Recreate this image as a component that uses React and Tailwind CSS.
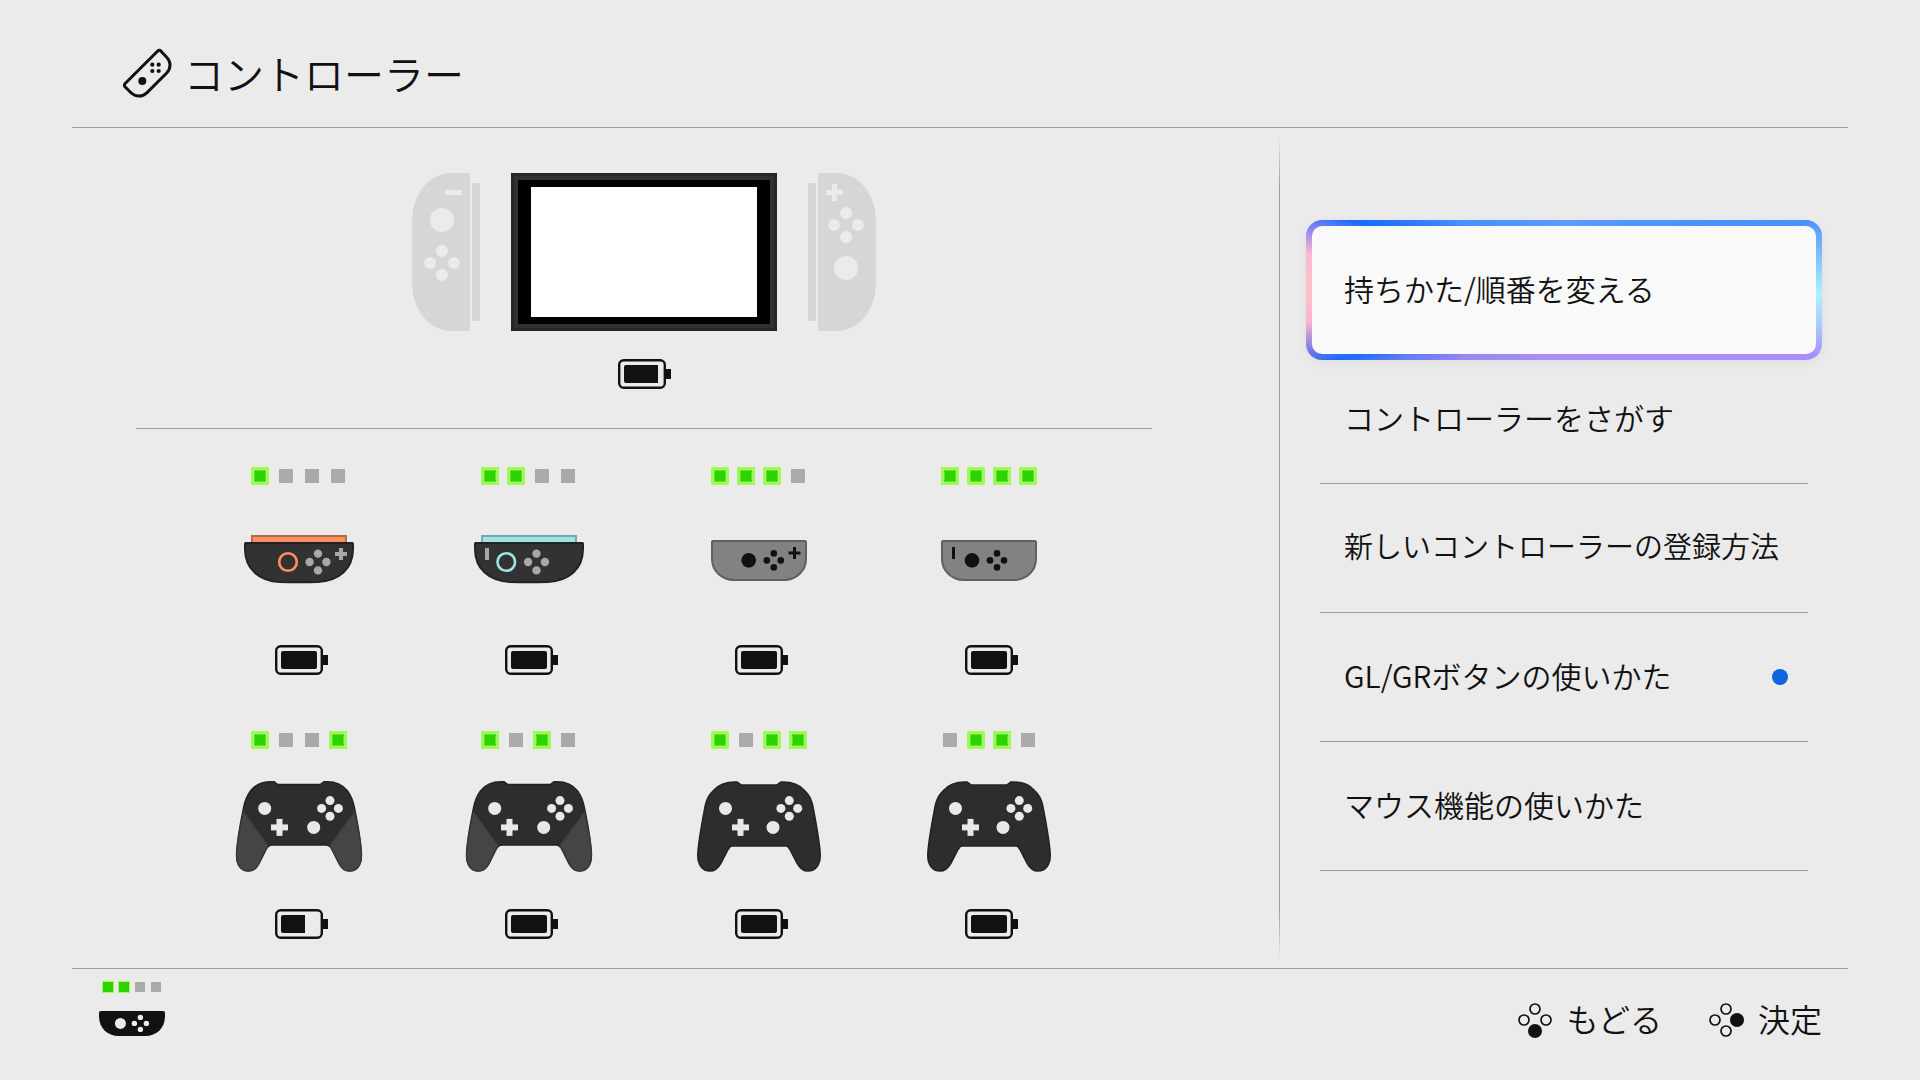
import { useState } from 'react'
import clsx from 'clsx'

const MENU = [
  { id: 'grip', label: '持ちかた/順番を変える' },
  { id: 'find', label: 'コントローラーをさがす' },
  { id: 'pair', label: '新しいコントローラーの登録方法', long: true },
  { id: 'glgr', label: 'GL/GRボタンの使いかた', unread: true },
  { id: 'mouse', label: 'マウス機能の使いかた' },
]

const CONTROLLERS = [
  { id: 1, kind: 'joycon2-right', lights: [1, 0, 0, 0], charge: 36 },
  { id: 2, kind: 'joycon2-left', lights: [1, 1, 0, 0], charge: 36 },
  { id: 3, kind: 'joycon-right', lights: [1, 1, 1, 0], charge: 36 },
  { id: 4, kind: 'joycon-left', lights: [1, 1, 1, 1], charge: 36 },
  { id: 5, kind: 'pro2', lights: [1, 0, 0, 1], charge: 24 },
  { id: 6, kind: 'pro2', lights: [1, 0, 1, 0], charge: 36 },
  { id: 7, kind: 'pro', lights: [1, 0, 1, 1], charge: 36 },
  { id: 8, kind: 'pro', lights: [0, 1, 1, 0], charge: 36 },
]

function Dots({ cx, cy, dx, dy = dx, r, fill }) {
  return (
    <g fill={fill}>
      <circle cx={cx} cy={cy - dy} r={r} />
      <circle cx={cx - dx} cy={cy} r={r} />
      <circle cx={cx + dx} cy={cy} r={r} />
      <circle cx={cx} cy={cy + dy} r={r} />
    </g>
  )
}

function Plus({ cx, cy, size, w, fill }) {
  return (
    <g fill={fill}>
      <rect x={cx - size / 2} y={cy - w / 2} width={size} height={w} />
      <rect x={cx - w / 2} y={cy - size / 2} width={w} height={size} />
    </g>
  )
}

function Battery({ charge }) {
  return (
    <svg width="54" height="30" viewBox="0 0 54 30">
      <rect x="2.2" y="1.2" width="45.6" height="27.6" rx="4.5" fill="none" stroke="#111" strokeWidth="2.4" />
      <rect x="49" y="10" width="5" height="10" fill="#111" />
      <rect x="7" y="6" width={charge} height="18" rx="2" fill="#111" />
      {charge < 36 && <rect x={charge} y="6" width="7" height="18" fill="#111" />}
    </svg>
  )
}

function Lights({ on }) {
  return (
    <div className="flex gap-2">
      {on.map((lit, i) => (
        <span key={i} className="w-[18px] h-[18px] flex items-center justify-center">
          {lit ? (
            <span className="w-[18px] h-[18px] bg-[#2dd200] border-3 border-[#a0f85a] ring-1 ring-inset ring-[#5be52a]" />
          ) : (
            <span className="w-[14px] h-[14px] bg-[#aaaaaa]" />
          )}
        </span>
      ))}
    </div>
  )
}

// Joy-Con 2 held sideways
function JoyCon2({ side }) {
  const right = side === 'right'
  const accent = right ? '#ff8f5e' : '#9fe3e6'
  const edge = right ? '#b06a4c' : '#76a9ac'
  return (
    <>
      <rect x="18" y="21" width="94" height="10" fill={accent} stroke={edge} strokeWidth="2" />
      <path
        d="M11.5 28H118.5Q119 28 119 28.5V34C119 54 105 66 84 67Q65 67.4 46 67C25 66 11 54 11 34V28.5Q11 28 11.5 28Z"
        fill="#323232"
        stroke="#222"
        strokeWidth="2"
      />
      <circle cx={right ? 54 : 42.3} cy="47" r="8.8" fill="none" stroke={accent} strokeWidth="2.6" />
      <Dots cx={right ? 84 : 72.5} cy={47} dx={8.4} r={4.2} fill="#a8a8a8" />
      {right ? (
        <Plus cx={107} cy={39} size={12} w={4} fill="#a8a8a8" />
      ) : (
        <rect x="21" y="33" width="4" height="12" fill="#a8a8a8" />
      )}
    </>
  )
}

function JoyCon({ side }) {
  const right = side === 'right'
  return (
    <>
      <path
        d="M19 26H111Q112 26 112 27V44C112 56 102 65 90 65H40C28 65 18 56 18 44V27Q18 26 19 26Z"
        fill="#828282"
        stroke="#606060"
        strokeWidth="2"
      />
      <circle cx={right ? 54.7 : 48} cy="45.4" r="7.3" fill="#111" />
      <Dots cx={right ? 79.8 : 73} cy={45.4} dx={7} r={3.3} fill="#111" />
      {right ? (
        <Plus cx={100.5} cy={38} size={12} w={3} fill="#111" />
      ) : (
        <rect x="28" y="32" width="3" height="12" fill="#111" />
      )}
    </>
  )
}

const PRO2_BODY =
  'M65 5.5H43.5L40 2.8C31 2.2 22 4.5 16.5 12Q11.5 19 9.8 28C6.5 44 3 63 2.6 76C2.6 86 7 92 14.5 92C20 92 22.5 89.5 25 84.5L31.5 71.5Q34 66 38 66H92Q96 66 98.5 71.5L105 84.5C107.5 89.5 110 92 115.5 92C123 92 127.4 86 127.4 76C127 63 123.5 44 120.2 28Q118.5 19 113.5 12C108 4.5 99 2.2 90 2.8L86.5 5.5Z'

const PRO_BODY =
  'M65 6H47L43 3C33 2.6 25 5 19.5 11.5C14.5 16 12.5 20 11.2 27C8 44 4.2 63 3.8 76C3.8 86 8.5 92 16 92C21.5 92 24.5 88.5 27 84L34 70.5Q36 67 38 67H92Q94 67 96 70.5L103 84C105.5 88.5 108.5 92 114 92C121.5 92 126.2 86 126.2 76C125.8 63 122 44 118.8 27C117.5 20 115.5 16 110.5 11.5C105 5 97 2.6 87 3L83 6Z'

function Pro({ gen2 }) {
  return (
    <>
      <path d={gen2 ? PRO2_BODY : PRO_BODY} fill="#2d2d2d" stroke="#232323" strokeWidth="1.6" />
      {gen2 && (
        <g fill="#454545" stroke="#383838" strokeWidth="1.2">
          <path d="M9.5 32.5L34.3 66.5Q32.5 69 31.3 71.5L25 84.5C22.5 89.5 20 92 14.5 92C7 92 2.6 86 2.6 76C3 63 6.5 46 9.5 32.5Z" />
          <path d="M120.5 32.5L95.7 66.5Q97.5 69 98.7 71.5L105 84.5C107.5 89.5 110 92 115.5 92C123 92 127.4 86 127.4 76C127 63 123.5 46 120.5 32.5Z" />
        </g>
      )}
      <circle cx={gen2 ? 30.7 : 31.5} cy="29.4" r="6.5" fill="#e8e8e8" />
      <circle cx={gen2 ? 79.7 : 79} cy="48.4" r="6.5" fill="#e8e8e8" />
      <Plus cx={gen2 ? 45.5 : 46.5} cy={48.4} size={17} w={6} fill="#e8e8e8" />
      <Dots cx={gen2 ? 96 : 95.3} cy={29.4} dx={8.4} dy={7.8} r={4.5} fill="#e8e8e8" />
    </>
  )
}

function ControllerArt({ kind }) {
  return (
    <svg width="130" height="96" viewBox="0 0 130 96">
      {kind === 'joycon2-right' && <JoyCon2 side="right" />}
      {kind === 'joycon2-left' && <JoyCon2 side="left" />}
      {kind === 'joycon-right' && <JoyCon side="right" />}
      {kind === 'joycon-left' && <JoyCon side="left" />}
      {kind === 'pro2' && <Pro gen2 />}
      {kind === 'pro' && <Pro />}
    </svg>
  )
}

function Console() {
  return (
    <div className="flex items-center justify-center gap-[31px]">
      <svg width="68" height="158" viewBox="0 0 68 158">
        <path d="M56 0H40C14 0 0 24 0 50V108C0 134 14 158 40 158H56Q58 158 58 156V2Q58 0 56 0Z" fill="#d6d6d6" />
        <rect x="60" y="10" width="8" height="138" rx="1.5" fill="#d6d6d6" />
        <rect x="33" y="17" width="17" height="5" fill="#ebebeb" />
        <circle cx="30" cy="47" r="12" fill="#ebebeb" />
        <Dots cx={30} cy={90} dx={12} r={6} fill="#ebebeb" />
      </svg>
      <div className="w-[266px] h-[158px] bg-black border-3 border-[#262626]">
        <div className="h-full border-4 border-[#313131] px-[13px] py-[7px]">
          <div className="h-full bg-white" />
        </div>
      </div>
      <svg width="68" height="158" viewBox="0 0 68 158">
        <path d="M12 0H28C54 0 68 24 68 50V108C68 134 54 158 28 158H12Q10 158 10 156V2Q10 0 12 0Z" fill="#d6d6d6" />
        <rect x="0" y="10" width="8" height="138" rx="1.5" fill="#d6d6d6" />
        <Plus cx={26.5} cy={19.5} size={17} w={5} fill="#ebebeb" />
        <Dots cx={38} cy={52} dx={12} r={6} fill="#ebebeb" />
        <circle cx="38" cy="95" r="12" fill="#ebebeb" />
      </svg>
    </div>
  )
}

function HeaderIcon() {
  return (
    <svg width="50" height="50" viewBox="0 0 50 50">
      <path
        d="M35.5 3.2L3.2 35.4Q1.6 37.3 3.2 39L9 44.7C13.5 49 20 49.3 24.8 44.8L44.7 25C49.2 20 49 13.5 44.7 9.2L39 3.2Q37.3 1.6 35.5 3.2Z"
        fill="none"
        stroke="#111"
        strokeWidth="3"
      />
      <circle cx="20.3" cy="33" r="4" fill="#111" />
      <g fill="#111">
        <circle cx="30.3" cy="16.7" r="2.1" />
        <circle cx="36.7" cy="16.7" r="2.1" />
        <circle cx="30.3" cy="23" r="2.1" />
        <circle cx="36.7" cy="23" r="2.1" />
      </g>
    </svg>
  )
}

// Face buttons hint, `pressed` is the filled one
function FaceButtons({ pressed }) {
  const spots = { top: [18, 7], left: [7, 18], right: [29, 18], bottom: [18, 29] }
  return (
    <svg width="36" height="36" viewBox="0 0 36 36">
      {Object.entries(spots).map(([name, [x, y]]) =>
        name === pressed ? (
          <circle key={name} cx={x} cy={y} r="7" fill="#111" />
        ) : (
          <circle key={name} cx={x} cy={y} r="5" fill="none" stroke="#111" strokeWidth="1.7" />
        )
      )}
    </svg>
  )
}

function ActivePad() {
  return (
    <div className="flex flex-col items-center">
      <div className="flex gap-1">
        {[1, 1, 0, 0].map((lit, i) => (
          <span key={i} className="w-3 h-3 flex items-center justify-center">
            <span className={lit ? 'w-3 h-3 bg-[#2dd200] border border-[#a0f85a]' : 'w-2.5 h-2.5 bg-[#aaaaaa]'} />
          </span>
        ))}
      </div>
      <svg className="mt-[18px]" width="66" height="25" viewBox="0 0 66 25">
        <path d="M2 0H64Q66 0 66 2V5C66 17 58 25 46 25H20C8 25 0 17 0 5V2Q0 0 2 0Z" fill="#111" />
        <circle cx="21.4" cy="12.4" r="5.5" fill="#ebebeb" />
        <Dots cx={41.4} cy={12.4} dx={6} r={2.7} fill="#ebebeb" />
      </svg>
    </div>
  )
}

function MenuItem({ item, active, onSelect }) {
  if (active) {
    return (
      <li className="h-[130px] -mx-3.5 flex items-center">
        <button
          onClick={onSelect}
          className="w-full h-[140px] shrink-0 p-1.5 rounded-[16px] shadow-[0_3px_12px_rgba(0,0,0,0.06)] bg-[conic-gradient(#5b9dff_0deg,#4a90ff_74deg,#78b8ff_81deg,#aef0ff_91deg,#a8ccff_98deg,#a98cff_105deg,#ae8ef8_190deg,#9a88f2_235deg,#6a7af0_247deg,#1a6cf8_253deg,#6a74e8_256deg,#ffb4cc_263deg,#ffc2c6_270deg,#ffb8d0_278deg,#8080f8_284deg,#1a6cf8_288deg,#4a90ff_303deg,#5b9dff_360deg)]"
        >
          <span className="h-full rounded-[10px] bg-[#f9f9f9] pl-8 pb-1 flex items-center">{item.label}</span>
        </button>
      </li>
    )
  }
  return (
    <li className="h-[129px] border-b border-[#a0a0a0]">
      <button
        onClick={onSelect}
        className={clsx('w-full h-full pl-6 pr-5 flex items-center justify-between', item.long && 'text-[29px]')}
      >
        <span className="pb-1">{item.label}</span>
        {item.unread && <span className="w-4 h-4 rounded-full bg-[#0f66de]" />}
      </button>
    </li>
  )
}

function App() {
  const [selected, setSelected] = useState('grip')

  return (
    <div className="min-h-screen flex flex-col bg-[#ebebeb] px-[72px] text-[#111] text-[30px] font-[350] font-['Noto_Sans_CJK_JP',sans-serif]">
      {/* Header */}
      <header className="h-32 shrink-0 border-b border-[#a0a0a0] pl-[50px] pt-[18px] flex items-center gap-3">
        <HeaderIcon />
        <h1 className="text-[40px] leading-none">コントローラー</h1>
      </header>

      <main className="flex-1 flex">
        {/* Connected controllers */}
        <section className="flex-1 pt-[45px] pl-16 pr-[127px]">
          <Console />
          <div className="mt-7 flex justify-center">
            <Battery charge={34} />
          </div>
          <hr className="mt-[39px] border-[#a0a0a0]" />
          <ul className="mt-[38px] mx-12 grid grid-cols-4 gap-y-14">
            {CONTROLLERS.map((c) => (
              <li key={c.id} className="flex flex-col items-center">
                <Lights on={c.lights} />
                <div className="mt-[30px] mb-[34px]">
                  <ControllerArt kind={c.kind} />
                </div>
                <div className="pl-1">
                  <Battery charge={c.charge} />
                </div>
              </li>
            ))}
          </ul>
        </section>

        <div className="w-px my-2 bg-[linear-gradient(transparent,#a0a0a0_6%,#a0a0a0_94%,transparent)]" />

        {/* Menu */}
        <nav className="w-[568px] pt-[97px] px-10">
          <ul>
            {MENU.map((item) => (
              <MenuItem key={item.id} item={item} active={item.id === selected} onSelect={() => setSelected(item.id)} />
            ))}
          </ul>
        </nav>
      </main>

      {/* Footer */}
      <footer className="h-28 shrink-0 border-t border-[#a0a0a0] pl-[27px] pr-[26px] flex justify-between">
        <div className="pt-3">
          <ActivePad />
        </div>
        <div className="h-[102px] flex items-center gap-[46px] text-[32px]">
          <button className="flex items-center gap-3.5">
            <FaceButtons pressed="bottom" />
            <span className="pb-1">もどる</span>
          </button>
          <button className="flex items-center gap-3.5">
            <FaceButtons pressed="right" />
            <span className="pb-1">決定</span>
          </button>
        </div>
      </footer>
    </div>
  )
}

export default App
